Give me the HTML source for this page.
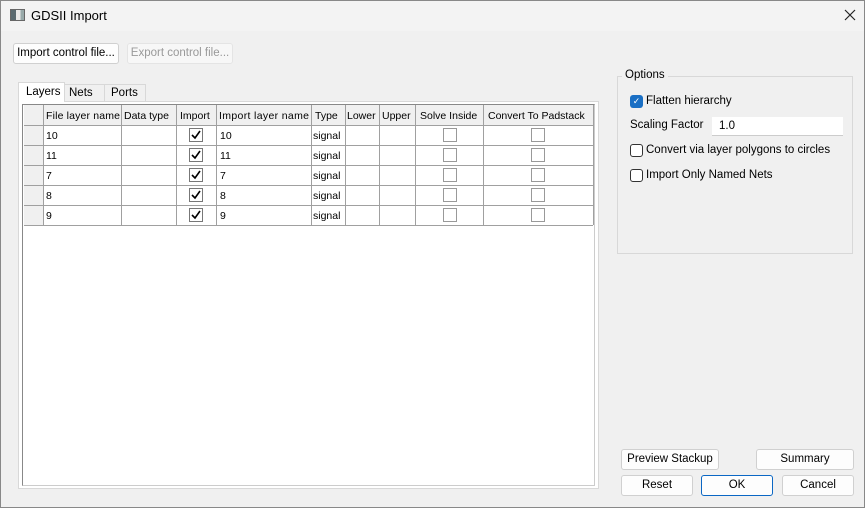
<!DOCTYPE html>
<html><head><style>
*{box-sizing:border-box;margin:0;padding:0}
body{width:865px;height:508px;background:#f0f0f0;font-family:"Liberation Sans",sans-serif;font-size:11.5px;color:#000;position:relative;overflow:hidden}
.frame{position:absolute;left:0;top:0;width:865px;height:508px;border:1px solid #888;pointer-events:none}
.a{position:absolute}
.btn{position:absolute;background:#fdfdfd;border:1px solid #d0d0d0;border-radius:3px;text-align:center;font-size:11.5px;line-height:19px}
.cb{position:absolute;width:13px;height:13px;border:1px solid #333;border-radius:3px;background:#fff}
</style></head><body>
<div class="a" style="left:0;top:0;width:865px;height:31px;background:#f3f3f3"></div>
<div class="a" style="left:10px;top:9px;width:15px;height:12px;border:1px solid #666;background:linear-gradient(90deg,#5a6a70 0 40%,#e8e8e8 40% 75%,#9aa 75%)"></div>
<div class="a" style="left:31px;top:8px;font-size:13px">GDSII Import</div>
<svg class="a" style="left:844px;top:9px" width="12" height="12"><path d="M1 1L11 11M11 1L1 11" stroke="#222" stroke-width="1.2"/></svg>
<div class="btn" style="left:13px;top:43px;width:106px;height:21px">Import control file...</div>
<div class="btn" style="left:127px;top:43px;width:106px;height:21px;color:#999;background:#f7f7f7;border-color:#e4e4e4">Export control file...</div>
<div class="a" style="left:18px;top:101px;width:581px;height:388px;border:1px solid #d8d8d8;background:#fff"></div>
<div class="a" style="left:18px;top:82px;width:47px;height:20px;background:#fff;border:1px solid #d8d8d8;border-bottom:none;padding:3px 0 0 7px">Layers</div>
<div class="a" style="left:65px;top:84px;width:40px;height:17px;border:1px solid #d8d8d8;border-bottom:none;border-left:none;padding:2px 0 0 4px">Nets</div>
<div class="a" style="left:105px;top:84px;width:41px;height:17px;border:1px solid #d8d8d8;border-bottom:none;border-left:none;padding:2px 0 0 6px">Ports</div>
<div class="a" style="left:22px;top:104px;width:573px;height:382px;border:1px solid #888;border-right-color:#ccc;border-bottom-color:#ccc"></div>
<svg class="a" style="left:0;top:0" width="865" height="508">
<rect x="24" y="105" width="569" height="20" fill="#f0f0f0"/>
<rect x="24" y="105" width="19" height="120" fill="#f0f0f0"/>
<g stroke="#a0a0a0" stroke-width="1" shape-rendering="crispEdges">
<line x1="24" y1="125.5" x2="593" y2="125.5"/><line x1="24" y1="145.5" x2="593" y2="145.5"/><line x1="24" y1="165.5" x2="593" y2="165.5"/><line x1="24" y1="185.5" x2="593" y2="185.5"/><line x1="24" y1="205.5" x2="593" y2="205.5"/><line x1="24" y1="225.5" x2="593" y2="225.5"/>
<line x1="43.5" y1="105" x2="43.5" y2="225"/><line x1="121.5" y1="105" x2="121.5" y2="225"/><line x1="176.5" y1="105" x2="176.5" y2="225"/><line x1="216.5" y1="105" x2="216.5" y2="225"/><line x1="311.5" y1="105" x2="311.5" y2="225"/><line x1="345.5" y1="105" x2="345.5" y2="225"/><line x1="379.5" y1="105" x2="379.5" y2="225"/><line x1="415.5" y1="105" x2="415.5" y2="225"/><line x1="483.5" y1="105" x2="483.5" y2="225"/><line x1="593.5" y1="105" x2="593.5" y2="225"/>
</g>
<g font-family="Liberation Sans" font-size="10.5" fill="#000">
<text x="46" y="119" textLength="74">File layer name</text><text x="124" y="119">Data type</text><text x="180" y="119">Import</text><text x="219" y="119" textLength="90">Import layer name</text><text x="315" y="119">Type</text><text x="347" y="119">Lower</text><text x="382" y="119">Upper</text><text x="420" y="119">Solve Inside</text><text x="488" y="119">Convert To Padstack</text>
<text x="46" y="139">10</text><text x="46" y="159">11</text><text x="46" y="179">7</text><text x="46" y="199">8</text><text x="46" y="219">9</text>
<text x="220" y="139">10</text><text x="220" y="159">11</text><text x="220" y="179">7</text><text x="220" y="199">8</text><text x="220" y="219">9</text>
<text x="313" y="139">signal</text><text x="313" y="159">signal</text><text x="313" y="179">signal</text><text x="313" y="199">signal</text><text x="313" y="219">signal</text>
</g>
<g shape-rendering="crispEdges">
<g id="r"><rect x="189.5" y="128.5" width="13" height="13" fill="#fff" stroke="#777"/><path d="M192 135 l3 3 l5 -7" stroke="#000" stroke-width="1.6" fill="none" shape-rendering="auto"/>
<rect x="443.5" y="128.5" width="13" height="13" fill="#fff" stroke="#999"/><rect x="531.5" y="128.5" width="13" height="13" fill="#fff" stroke="#999"/></g>
<use href="#r" y="20"/><use href="#r" y="40"/><use href="#r" y="60"/><use href="#r" y="80"/>
</g>
</svg>
<div class="a" style="left:617px;top:76px;width:236px;height:178px;border:1px solid #d8d8d8"></div>
<div class="a" style="left:622px;top:69px;padding:0 3px;background:#f0f0f0">Options</div>
<div class="a" style="left:630px;top:95px;width:13px;height:13px;border-radius:3px;background:#1a6fc4;color:#fff;font-size:9px;line-height:13px;text-align:center">✓</div>
<div class="a" style="left:646px;top:95px">Flatten hierarchy</div>
<div class="a" style="left:630px;top:119px">Scaling Factor</div>
<div class="a" style="left:712px;top:117px;width:131px;height:19px;background:#fff;border-bottom:1px solid #ccc;padding:3px 0 0 7px">1.0</div>
<div class="cb" style="left:630px;top:144px"></div><div class="a" style="left:646px;top:144px">Convert via layer polygons to circles</div>
<div class="cb" style="left:630px;top:169px"></div><div class="a" style="left:646px;top:169px">Import Only Named Nets</div>
<div class="btn" style="left:621px;top:449px;width:98px;height:21px">Preview Stackup</div>
<div class="btn" style="left:756px;top:449px;width:98px;height:21px">Summary</div>
<div class="btn" style="left:621px;top:475px;width:72px;height:21px">Reset</div>
<div class="btn" style="left:701px;top:475px;width:72px;height:21px;border-color:#0b67c4">OK</div>
<div class="btn" style="left:782px;top:475px;width:72px;height:21px">Cancel</div>
<div class="frame"></div>
</body></html>
